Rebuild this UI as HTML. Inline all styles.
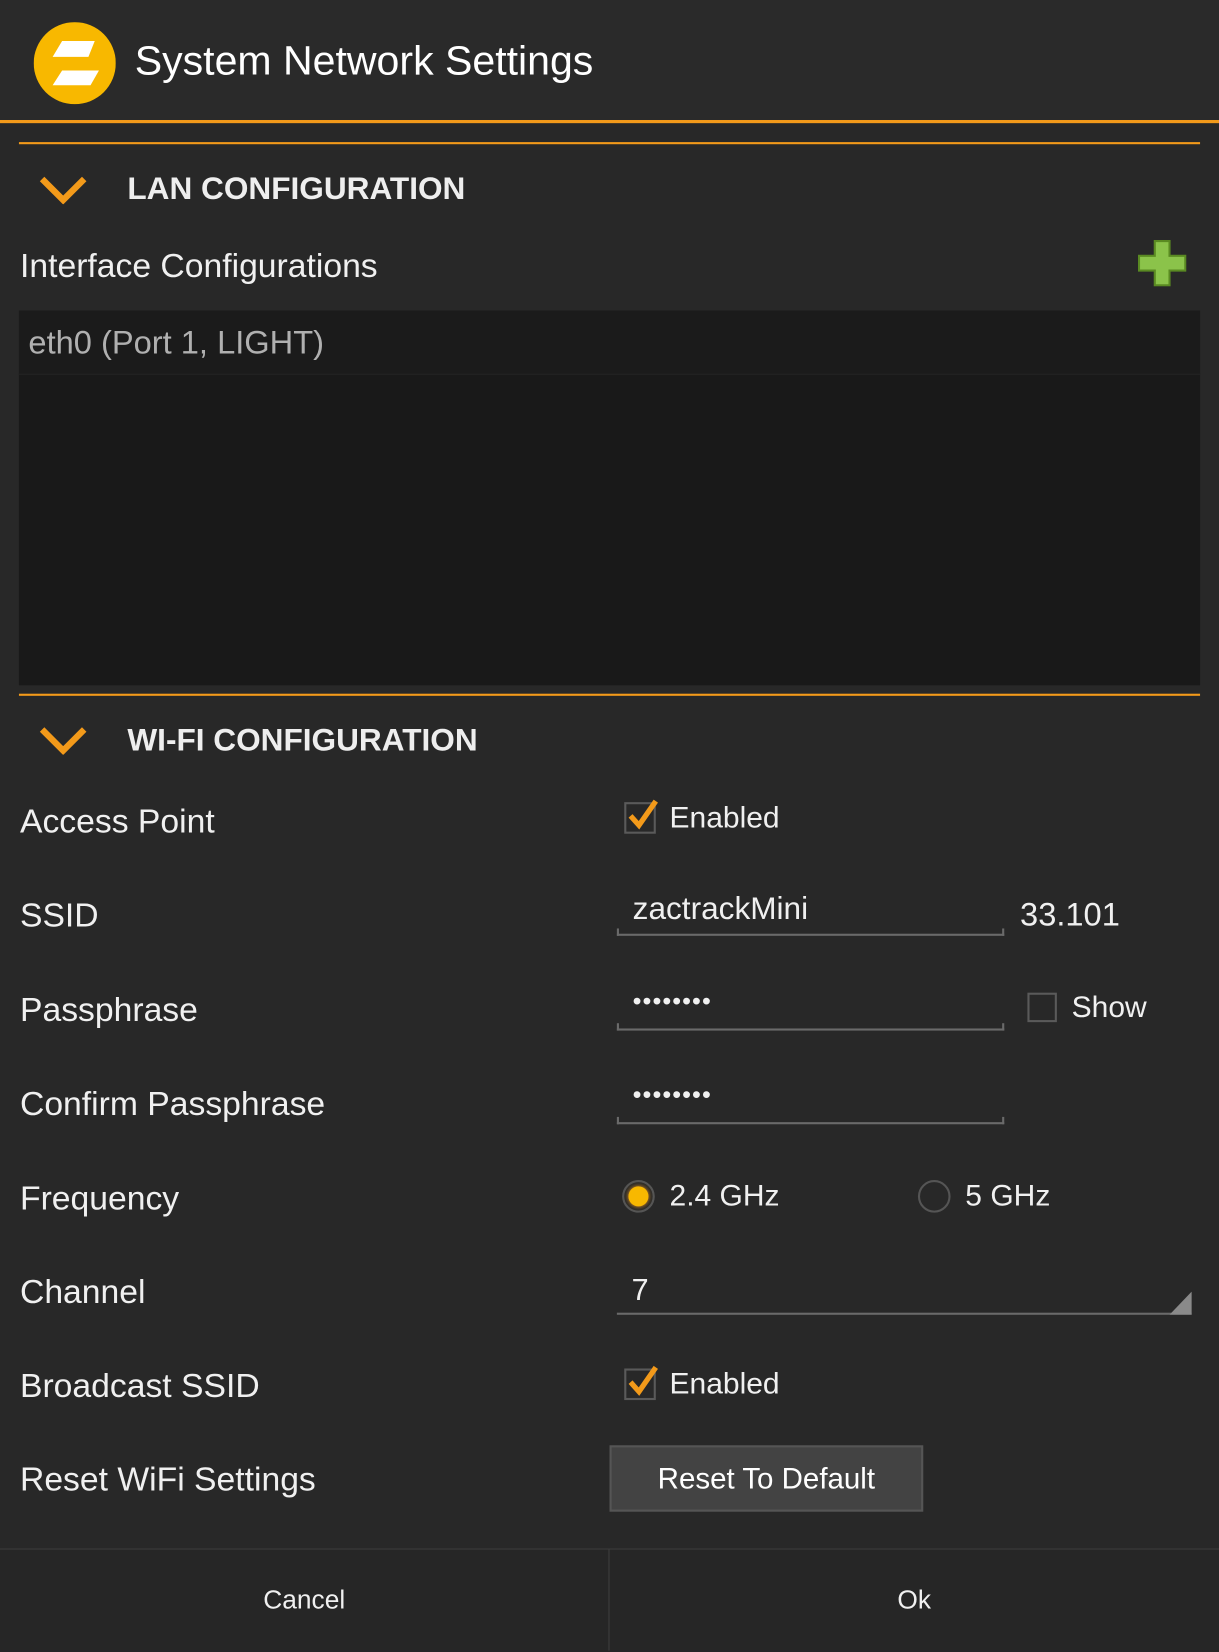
<!DOCTYPE html>
<html><head><meta charset="utf-8"><style>
html,body{margin:0;padding:0;background:#282828;width:1219px;height:1650px;overflow:hidden}
#w{position:absolute;left:0;top:0;width:1158px;height:1568px;transform:scale(1.05268);transform-origin:0 0;background:#282828;font-family:"Liberation Sans",sans-serif;color:#f0f0f0}
.a{position:absolute}
.t{position:absolute;line-height:1;white-space:nowrap}
.lbl{font-size:32px;left:19px}
.ul{position:absolute;height:2px;background:#6a6a6a}
.ul:before,.ul:after{content:"";position:absolute;bottom:0;width:2px;height:7px;background:#6a6a6a}
.ul:before{left:0}.ul:after{right:0}
.cb{position:absolute;width:26px;height:26px;border:2px solid #5a5a5a}
.dots{position:absolute;left:601px;font-size:24px;letter-spacing:1px;line-height:1}
</style></head><body><div id="w">
<div class="a" style="left:0;top:0;width:1158px;height:114px;background:#2a2a2a"></div>
<svg class="a" style="left:32px;top:21px" width="78" height="78" viewBox="0 0 78 78">
<circle cx="39" cy="39" r="39" fill="#f8b800"/>
<polygon points="27,18 58,18 52,33 18,33" fill="#fff"/>
<polygon points="27,46 62,46 54,60 18,60" fill="#fff"/>
</svg>
<div class="t" style="left:128px;top:39px;font-size:39px;color:#fff">System Network Settings</div>
<div class="a" style="left:0;top:114px;width:1158px;height:3px;background:#f39a1a"></div>
<div class="a" style="left:18px;top:135px;width:1122px;height:2px;background:#f39a1a"></div>
<svg class="a" style="left:36px;top:166px" width="48" height="28"><polyline points="4,4 24,24 44,4" fill="none" stroke="#f39a1a" stroke-width="6"/></svg>
<div class="t" style="left:121px;top:165px;font-size:30px;font-weight:bold;color:#eee">LAN CONFIGURATION</div>
<div class="t lbl" style="top:236px">Interface Configurations</div>
<svg class="a" style="left:1081px;top:228px" width="46" height="44"><path d="M16,1h14v14h15v14h-15v14h-14v-14h-15v-14h15z" fill="#8bc34a" stroke="#5a8a22" stroke-width="2"/></svg>
<div class="a" style="left:18px;top:295px;width:1122px;height:356px;background:#191919"></div>
<div class="a" style="left:18px;top:295px;width:1122px;height:60px;background:#1b1b1b;border-bottom:1px solid #242424"></div>
<div class="t" style="left:27px;top:310px;font-size:31px;color:#b0b0b0">eth0 (Port 1, LIGHT)</div>
<div class="a" style="left:18px;top:659px;width:1122px;height:2px;background:#f39a1a"></div>
<svg class="a" style="left:36px;top:689px" width="48" height="28"><polyline points="4,4 24,24 44,4" fill="none" stroke="#f39a1a" stroke-width="6"/></svg>
<div class="t" style="left:121px;top:689px;font-size:30px;font-weight:bold;color:#eee">WI-FI CONFIGURATION</div>

<div class="t lbl" style="top:764px">Access Point</div>
<div class="cb" style="left:593px;top:762px"></div>
<svg class="a" style="left:594px;top:756px" width="34" height="34"><polyline points="5,19 13,28 29,5" fill="none" stroke="#f39a1a" stroke-width="5"/></svg>
<div class="t" style="left:636px;top:763px;font-size:28.5px">Enabled</div>

<div class="t lbl" style="top:853px">SSID</div>
<div class="t" style="left:601px;top:849px;font-size:30px">zactrackMini</div>
<div class="ul" style="left:586px;top:887px;width:368px"></div>
<div class="t" style="left:969px;top:853px;font-size:31px">33.101</div>

<div class="t lbl" style="top:943px">Passphrase</div>
<div class="dots" style="top:940px">••••••••</div>
<div class="ul" style="left:586px;top:977px;width:368px"></div>
<div class="cb" style="left:976px;top:943px;width:24px;height:24px"></div>
<div class="t" style="left:1018px;top:943px;font-size:28.5px">Show</div>

<div class="t lbl" style="top:1032px">Confirm Passphrase</div>
<div class="dots" style="top:1029px">••••••••</div>
<div class="ul" style="left:586px;top:1066px;width:368px"></div>

<div class="t lbl" style="top:1122px">Frequency</div>
<div class="a" style="left:591px;top:1121px;width:27px;height:27px;border-radius:50%;border:2px solid #555;background:#2a2a2a"></div>
<div class="a" style="left:597px;top:1127px;width:19px;height:19px;border-radius:50%;background:#f8b800;box-shadow:0 0 4px #f39a1a"></div>
<div class="t" style="left:636px;top:1122px;font-size:28.5px">2.4 GHz</div>
<div class="a" style="left:872px;top:1121px;width:27px;height:27px;border-radius:50%;border:2px solid #555"></div>
<div class="t" style="left:917px;top:1122px;font-size:28.5px">5 GHz</div>

<div class="t lbl" style="top:1211px">Channel</div>
<div class="t" style="left:600px;top:1212px;font-size:29px">7</div>
<div class="a" style="left:586px;top:1247px;width:546px;height:2px;background:#6a6a6a"></div>
<svg class="a" style="left:1111px;top:1227px" width="22" height="22"><polygon points="21,0 21,22 0,22" fill="#8a8a8a"/></svg>

<div class="t lbl" style="top:1300px">Broadcast SSID</div>
<div class="cb" style="left:593px;top:1300px"></div>
<svg class="a" style="left:594px;top:1294px" width="34" height="34"><polyline points="5,19 13,28 29,5" fill="none" stroke="#f39a1a" stroke-width="5"/></svg>
<div class="t" style="left:636px;top:1301px;font-size:28.5px">Enabled</div>

<div class="t lbl" style="top:1389px">Reset WiFi Settings</div>
<div class="a" style="left:579px;top:1373px;width:294px;height:59px;background:#434343;border:2px solid #555;text-align:center;line-height:59px;font-size:28px;color:#fff">Reset To Default</div>

<div class="a" style="left:0;top:1471px;width:1158px;height:97px;background:#262626;border-top:1px solid #3e3e3e"></div>
<div class="a" style="left:578px;top:1471px;width:1px;height:97px;background:#3e3e3e"></div>
<div class="t" style="left:0;width:578px;text-align:center;top:1508px;font-size:25px">Cancel</div>
<div class="t" style="left:579px;width:579px;text-align:center;top:1508px;font-size:25px">Ok</div>
</div></body></html>
